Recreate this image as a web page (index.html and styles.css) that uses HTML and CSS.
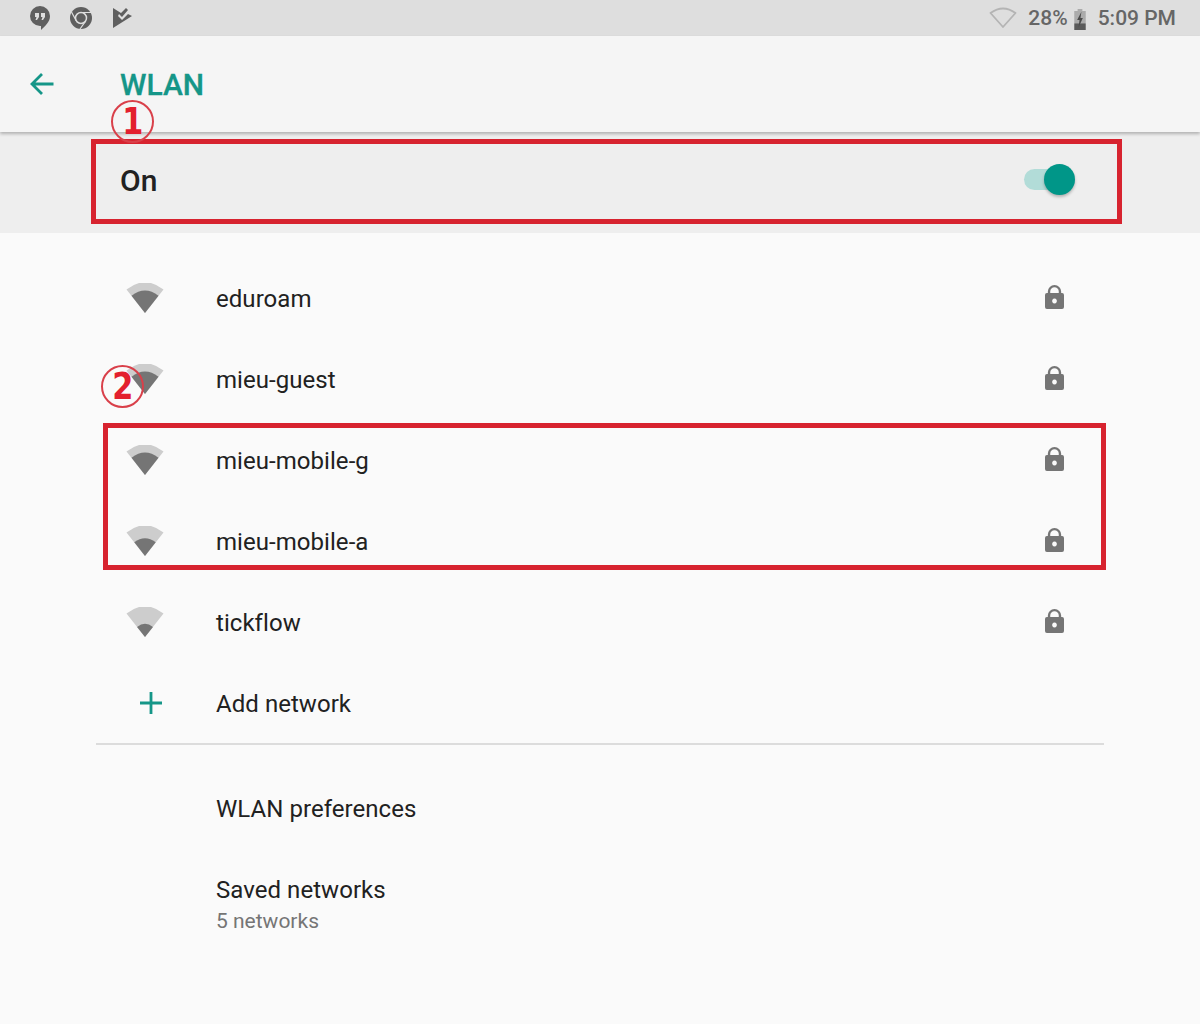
FILE: index.html
```html
<!DOCTYPE html>
<html lang="en">

<head>
	<title>WLAN</title>
	<meta charset="utf-8"/>
	<link rel="stylesheet" href="styles.css">
</head>

<body>
	<svg width="0" height="0" class="defs">
		<defs>
			<path id="wedge" d="M19 30 L.500 6.500 Q19 -8 37.500 6.500 Z"/>
			<path id="lock-shape" fill-rule="evenodd" d="M3 8 V6.500 a7 6.500 0 0 1 14 0 V8 h1 a2 2 0 0 1 2 2 v12 a2 2 0 0 1 -2 2 h-16 a2 2 0 0 1 -2 -2 v-12 a2 2 0 0 1 2 -2 Z M5.500 8 h9 V6.500 a4.500 4.200 0 0 0 -9 0 Z M10 13.500 a2.500 2.500 0 1 0 .01 0 Z"/>
		</defs>
	</svg>

	<div id="status-bar">
		<div class="status-left">
			<svg class="st-hangouts" width="22" height="26" viewBox="0 0 22 26">
				<path d="M11 1 a10 10 0 0 1 10 10 c0 6 -5 10 -9 14 v-4 h-1 a10 10 0 0 1 0 -20 Z" fill="#5f5f5f"/>
				<path d="M6 8 h4 v4 l-2 3 h-1.500 l1 -3 h-1.500 Z M12 8 h4 v4 l-2 3 h-1.500 l1 -3 h-1.500 Z" fill="#dedede"/>
			</svg>
			<svg class="st-chrome" width="24" height="24" viewBox="0 0 24 24">
				<circle cx="12" cy="12" r="11" fill="#5f5f5f"/>
				<circle cx="12" cy="12" r="5.500" fill="none" stroke="#dedede" stroke-width="1.500"/>
				<path d="M12 6.500 H22 M7.200 14.800 L2.500 6 M16.800 14.800 L11 23" stroke="#dedede" stroke-width="1.200" fill="none"/>
			</svg>
			<svg class="st-flag" width="20" height="20" viewBox="0 0 20 20">
				<path d="M0 0 L8 5 L13 0 L15 2 L9 9 L6 6 L5 8 L9 12 L15 6 L19 8 L0 20 Z" fill="#5f5f5f"/>
			</svg>
		</div>
		<div class="status-right">
			<svg class="st-wifi" width="28" height="22" viewBox="0 0 28 22">
				<path d="M14 20 L1.500 6 Q14 -3 26.500 6 Z" fill="none" stroke="#b4b4b4" stroke-width="1.800" stroke-linejoin="round"/>
			</svg>
			<span class="st-batt-text">28%</span>
			<svg class="st-batt" width="12" height="21" viewBox="0 0 12 22">
				<path d="M3.500 0 h5 v2 h3.500 v13 h-12 v-13 h3.500 Z" fill="#ababab"/>
				<rect x="0" y="15" width="12" height="7" fill="#5a5a5a"/>
				<path d="M7.500 3 L3 11.500 H5.500 L4.500 19 L9 9.500 H6.500 Z" fill="#4a4a4a"/>
			</svg>
			<span class="st-time">5:09 PM</span>
		</div>
	</div>

	<div id="toolbar">
		<svg class="back" width="24" height="24" viewBox="0 0 24 24">
			<path d="M23.500 12 H2 M12 2 L2 12 L12 22" fill="none" stroke="#159688" stroke-width="2.800"/>
		</svg>
		<h1>WLAN</h1>
	</div>

	<div id="switch-bar">
		<span class="switch-label">On</span>
		<div class="switch">
			<div class="track"></div>
			<div class="thumb"></div>
		</div>
	</div>

	<div id="content">
		<div class="row">
			<svg class="wifi" width="38" height="30" viewBox="0 0 38 30">
				<use href="#wedge" class="wifi-bg"/>
				<use href="#wedge" class="wifi-fg" transform="translate(19 30) scale(.73) translate(-19 -30)"/>
			</svg>
			<span class="name">eduroam</span>
			<svg class="lock" width="19" height="24" viewBox="0 0 20 24" preserveAspectRatio="none"><use href="#lock-shape"/></svg>
		</div>
		<div class="row">
			<svg class="wifi" width="38" height="30" viewBox="0 0 38 30">
				<use href="#wedge" class="wifi-bg"/>
				<use href="#wedge" class="wifi-fg" transform="translate(19 30) scale(.73) translate(-19 -30)"/>
			</svg>
			<span class="name">mieu-guest</span>
			<svg class="lock" width="19" height="24" viewBox="0 0 20 24" preserveAspectRatio="none"><use href="#lock-shape"/></svg>
		</div>
		<div class="row">
			<svg class="wifi" width="38" height="30" viewBox="0 0 38 30">
				<use href="#wedge" class="wifi-bg"/>
				<use href="#wedge" class="wifi-fg" transform="translate(19 30) scale(.73) translate(-19 -30)"/>
			</svg>
			<span class="name">mieu-mobile-g</span>
			<svg class="lock" width="19" height="24" viewBox="0 0 20 24" preserveAspectRatio="none"><use href="#lock-shape"/></svg>
		</div>
		<div class="row">
			<svg class="wifi" width="38" height="30" viewBox="0 0 38 30">
				<use href="#wedge" class="wifi-bg"/>
				<use href="#wedge" class="wifi-fg" transform="translate(19 30) scale(.58) translate(-19 -30)"/>
			</svg>
			<span class="name">mieu-mobile-a</span>
			<svg class="lock" width="19" height="24" viewBox="0 0 20 24" preserveAspectRatio="none"><use href="#lock-shape"/></svg>
		</div>
		<div class="row">
			<svg class="wifi" width="38" height="30" viewBox="0 0 38 30">
				<use href="#wedge" class="wifi-bg"/>
				<use href="#wedge" class="wifi-fg" transform="translate(19 30) scale(.43) translate(-19 -30)"/>
			</svg>
			<span class="name">tickflow</span>
			<svg class="lock" width="19" height="24" viewBox="0 0 20 24" preserveAspectRatio="none"><use href="#lock-shape"/></svg>
		</div>
		<div class="row">
			<svg class="plus" width="24" height="24" viewBox="0 0 24 24">
				<path d="M12 1 V23 M1 12 H23" stroke="#159688" stroke-width="2.800"/>
			</svg>
			<span class="name">Add network</span>
		</div>

		<div class="divider"></div>

		<div class="row pref">
			<span class="name">WLAN preferences</span>
		</div>
		<div class="row pref saved">
			<div>
				<div class="name">Saved networks</div>
				<div class="sub">5 networks</div>
			</div>
		</div>
	</div>

	<div class="mark" id="mark-one"></div>
	<div class="mark" id="mark-two"></div>
	<div class="num" id="num-one"><span>1</span></div>
	<div class="num" id="num-two"><span>2</span></div>
</body>
</html>
```

FILE: styles.css
```css
html, body {
	margin: 0;
	padding: 0;
}

body {
	position: relative;
	height: 1024px;
	overflow: hidden;
	background-color: #fafafa;
	font-family: Roboto, "Liberation Sans", sans-serif;
}

.defs {
	position: absolute;
}

#status-bar {
	height: 36px;
	background-color: #dedede;
	display: flex;
	justify-content: space-between;
	align-items: center;
	color: #666;
	font-size: 21px;
	font-weight: 500;
}

.status-left {
	display: flex;
	align-items: center;
	padding-left: 29px;
}

.st-hangouts { margin-top: -1px; }
.st-chrome { margin-left: 18px; }
.st-flag { margin-left: 20px; }

.status-right {
	display: flex;
	align-items: center;
	padding-right: 24px;
}

.st-wifi { margin-right: 11px; margin-top: -1px; }
.st-batt { margin: 2px 12px 0 6px; }

#toolbar {
	height: 96px;
	background-color: #f5f5f5;
	display: flex;
	align-items: center;
	padding-left: 30px;
	box-shadow: 0 2px 3px rgba(0, 0, 0, .25);
	position: relative;
}

#toolbar h1 {
	margin: 0 0 0 66px;
	font-size: 30px;
	font-weight: 500;
	color: #159688;
	-webkit-text-stroke: .3px #159688;
}

#switch-bar {
	height: 101px;
	background-color: #eeeeee;
	display: flex;
	align-items: center;
	justify-content: space-between;
	padding: 0 125px 0 120px;
}

.switch-label {
	font-size: 30px;
	font-weight: 500;
	color: #212121;
	margin-top: -4px;
}

.switch {
	position: relative;
	width: 51px;
	height: 32px;
	margin-top: -5px;
}

.track {
	position: absolute;
	left: 0;
	top: 5px;
	width: 40px;
	height: 21px;
	border-radius: 11px;
	background-color: #b2dcd8;
}

.thumb {
	position: absolute;
	right: 0;
	top: 0;
	width: 31px;
	height: 31px;
	border-radius: 50%;
	background-color: #009688;
	box-shadow: 0 2px 3px rgba(0, 0, 0, .25);
}

#content {
	padding-top: 25px;
}

.row {
	height: 81px;
	display: flex;
	align-items: center;
	padding: 0 136px 0 126px;
	position: relative;
}

.name {
	font-size: 24px;
	letter-spacing: .05px;
	color: #212121;
}

.wifi {
	width: 38px;
	margin: -2px 52px 0 0;
}

.wifi-bg { fill: #cdcdcd; }
.wifi-fg { fill: #757575; }

.lock {
	margin-left: auto;
	margin-top: -3px;
	fill: #757575;
}

.plus {
	margin: -2px 53px 0 13px;
}

.divider {
	height: 2px;
	margin: -1px 96px 0;
	background-color: #dcdcdc;
}

.pref {
	padding-left: 216px;
}

.divider + .pref {
	margin-top: 23px;
}

.saved {
	margin-top: 15px;
}

.sub {
	font-size: 21px;
	color: #757575;
	margin-top: 5px;
}

.mark {
	position: absolute;
	box-sizing: border-box;
	border: 5px solid #d7232f;
}

#mark-one {
	left: 91px;
	top: 139px;
	width: 1031px;
	height: 85px;
}

#mark-two {
	left: 103px;
	top: 423px;
	width: 1003px;
	height: 147px;
}

.num {
	position: absolute;
	box-sizing: border-box;
	width: 43px;
	height: 43px;
	border: 2px solid #d9404a;
	border-radius: 50%;
	color: #e3202e;
	font-family: "DejaVu Sans", sans-serif;
	font-weight: 700;
	font-size: 37px;
	line-height: 39px;
	text-align: center;
}

.num span {
	display: inline-block;
	transform: scaleX(.82);
}

#num-one { left: 111px; top: 100px; }
#num-two { left: 101px; top: 365px; }
```
